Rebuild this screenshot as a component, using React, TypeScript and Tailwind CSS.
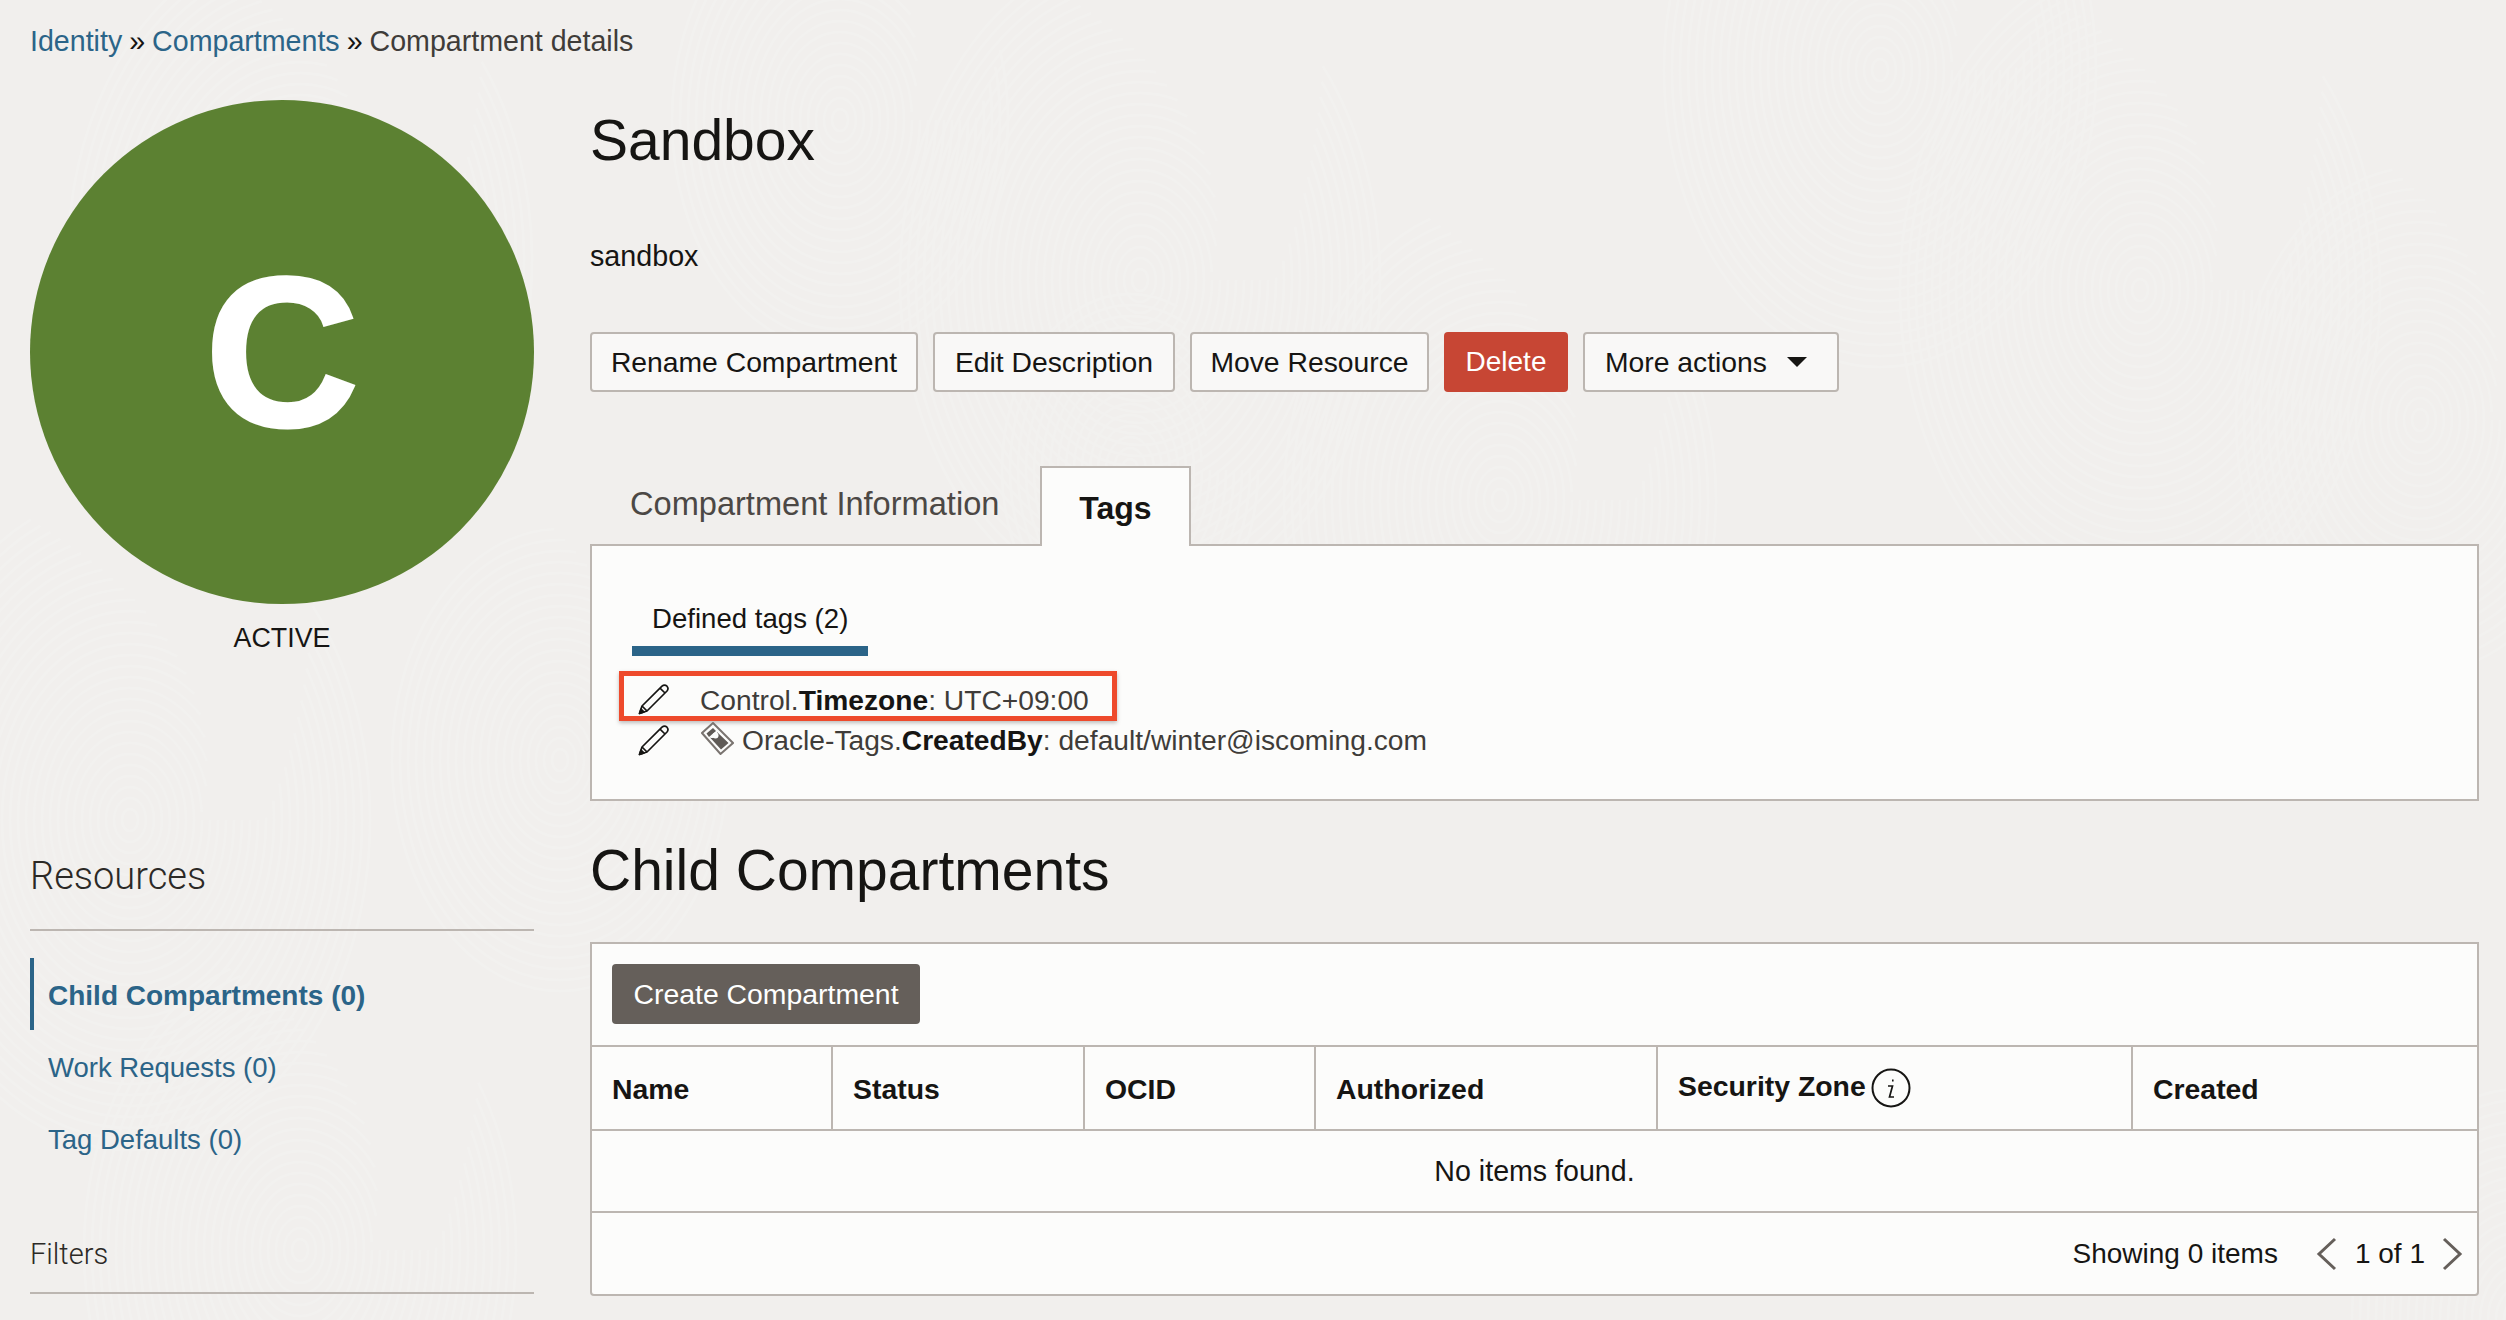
import React from "react";

const sans = "font-['Liberation_Sans',Arial,sans-serif]";

function Swirls() {
  const spots = [
    [300, 260, 320], [1140, 280, 340], [1880, 70, 300], [2140, 290, 330], [1500, 500, 300],
    [2420, 420, 260], [130, 820, 340], [300, 1250, 300], [560, 760, 240], [2520, 1320, 240], [840, 120, 240], [1130, 470, 180],
  ];
  return (
    <svg className="absolute inset-0 w-full h-full" width="2506" height="1320" aria-hidden="true">
      <g fill="none" stroke="#f3f2f0" strokeWidth="3" opacity="0.75">
        {spots.map(([x, y, r], i) =>
          Array.from({ length: Math.floor(r / 11) }, (_, k) => (
            <ellipse key={`${i}-${k}`} cx={x} cy={y} rx={(k + 1) * 8} ry={(k + 1) * 11} strokeDasharray={`${260 + k * 34} ${70 + k * 9}`} />
          ))
        )}
      </g>
    </svg>
  );
}

function Pencil({ className = "" }: { className?: string }) {
  return (
    <svg width="32" height="32" viewBox="0 0 32 32" fill="none" stroke="#161513" strokeWidth="1.7" strokeLinejoin="round" className={`shrink-0 ${className}`}>
      <path d="M1.5 30.5 L4 23 L24 3.2 Q26.5 1 29 3.2 Q31 5.5 29 8 L9 28 Z" />
      <path d="M4 23 L9 28" />
      <path d="M22 5.2 L27 10" />
      <path d="M1.5 30.5 L3 26 L6 29 Z" fill="#161513" />
    </svg>
  );
}

function TagIcon() {
  return (
    <svg width="33" height="33" viewBox="0 0 33 33" className="block shrink-0">
      <path d="M12 1 L32 21 L19.5 32 L1 11 Z" fill="#fcfcfb" stroke="#7a7470" strokeWidth="2" strokeLinejoin="miter" />
      <path d="M12 6 L15 9 L8 15 L5.5 11.5 Z" fill="#5f5a56" />
      <path d="M16 10 L27.5 21 L20 27.5 L9 15.5 Q13 17 15 14 Q17 12 16 10 Z" fill="#5f5a56" />
      <circle cx="14.5" cy="13.5" r="3" fill="#fcfcfb" />
    </svg>
  );
}

function Btn({ w, children, className = "justify-center" }: { w: string; children: React.ReactNode; className?: string }) {
  return (
    <button className={`${w} ${className} h-[60px] shrink-0 rounded-[4px] border-2 border-[#bcb6b1] bg-[#f9f8f7] text-[28.3px] text-[#161513] flex items-center`}>
      {children}
    </button>
  );
}

function Th({ w, children }: { w: string; children: React.ReactNode }) {
  return (
    <div className={`${w} shrink-0 h-full border-r-2 border-[#bcb6b1] last:border-r-0 pl-[20px] pt-[2px] flex items-center text-[28.4px] font-bold text-[#161513]`}>
      {children}
    </div>
  );
}

export default function App() {
  return (
    <div className={`relative w-[2506px] h-[1320px] overflow-hidden bg-[#f1efed] ${sans}`}>
      <Swirls />
      <div className="relative">
        <div className="h-[80px] pl-[30px] pt-[2px] flex items-center text-[28.6px] text-[#3f3c39] whitespace-nowrap">
          <span className="text-[#2b6488]">Identity</span>
          <span className="mx-[7px] text-[#161513]">»</span>
          <span className="text-[#2b6488]">Compartments</span>
          <span className="mx-[7px] text-[#161513]">»</span>
          <span>Compartment details</span>
        </div>
        <div className="flex pl-[30px]">
          <aside className="w-[504px] shrink-0 pt-[20px]">
            <div className="w-[504px] h-[504px] rounded-full bg-[#5c8132] flex items-center justify-center text-white text-[214px] font-bold leading-none [-webkit-text-stroke:3px_white]">
              C
            </div>
            <div className="mt-[14px] h-[40px] flex items-center justify-center text-[26.8px] text-[#161513]">ACTIVE</div>
            <div className="mt-[188px] h-[60px] flex items-center text-[38px] font-['Roboto',sans-serif] font-light text-[#2b2926]">Resources</div>
            <div className="mt-[23px] h-[2px] bg-[#bcb6b1]" />
            <nav className="mt-[27px] text-[27.5px] text-[#2b6488]">
              <div className="h-[72px] border-l-4 border-[#2b6488] pl-[14px] pt-[3px] flex items-center font-bold text-[28px]">Child Compartments (0)</div>
              <div className="h-[72px] pl-[18px] pt-[3px] flex items-center">Work Requests (0)</div>
              <div className="h-[72px] pl-[18px] pt-[3px] flex items-center">Tag Defaults (0)</div>
            </nav>
            <div className="mt-[51px] h-[60px] flex items-center text-[29px] font-['Roboto',sans-serif] font-light text-[#2b2926]">Filters</div>
            <div className="mt-[7px] h-[2px] bg-[#bcb6b1]" />
          </aside>

          <main className="ml-[56px] w-[1889px] shrink-0">
            <h1 className="mt-[21px] h-[80px] flex items-center text-[57px] text-[#161513]">Sandbox</h1>
            <div className="mt-[56px] h-[40px] flex items-center text-[28.7px] text-[#161513]">sandbox</div>
            <div className="mt-[55px] flex gap-[15px]">
              <Btn w="w-[328px]">Rename Compartment</Btn>
              <Btn w="w-[242px]">Edit Description</Btn>
              <Btn w="w-[239px]">Move Resource</Btn>
              <button className="w-[124px] h-[60px] shrink-0 rounded-[4px] bg-[#c74634] text-[28px] text-white">Delete</button>
              <Btn w="w-[256px]" className="justify-start pl-[20px]">
                More actions
                <svg width="20" height="10" viewBox="0 0 20 10" className="ml-[20px]"><path d="M0 0 H20 L10 10 Z" fill="#161513" /></svg>
              </Btn>
            </div>

            <div className="mt-[74px] h-[78px] flex">
              <div className="w-[450px] h-[76px] pl-[40px] flex items-center text-[32.6px] text-[#4c4845]">Compartment Information</div>
              <div className="w-[151px] h-[80px] -mb-[2px] relative z-10 border-2 border-b-0 border-[#bcb6b1] bg-[#fcfcfb] flex items-center justify-center pt-[2px] text-[32px] font-bold text-[#161513]">Tags</div>
            </div>
            <section className="h-[257px] border-2 border-[#bcb6b1] bg-[#fcfcfb]">
              <div className="ml-[40px] mt-[46px] w-[236px] h-[64px] border-b-[10px] border-[#2b6488] pl-[20px] flex items-center text-[27.6px] text-[#161513]">Defined tags (2)</div>
              <div className="ml-[27px] mt-[15px] w-[498px] h-[50px] border-[5px] border-[#ee4a2c] shadow-[0_2px_4px_rgba(0,0,0,0.25)] pl-[14px] flex items-center text-[28.2px] text-[#3f3c39] whitespace-nowrap">
                <Pencil className="mt-[5px]" />
                <span className="ml-[30px] mt-[8px]">Control.<b className="text-[#161513]">Timezone</b>: UTC+09:00</span>
              </div>
              <div className="ml-[46px] h-[38px] flex items-center text-[28.2px] text-[#3f3c39] whitespace-nowrap">
                <Pencil />
                <span className="ml-[31px] mr-[8px] -mt-[4px]"><TagIcon /></span>
                <span>Oracle-Tags.<b className="text-[#161513]">CreatedBy</b>: default/winter@iscoming.com</span>
              </div>
            </section>

            <h2 className="mt-[30px] h-[80px] flex items-center text-[57px] text-[#161513]">Child Compartments</h2>
            <section className="mt-[31px] h-[354px] rounded-b-[4px] border-2 border-[#bcb6b1] bg-[#fcfcfb]">
              <div className="h-[101px] px-[20px] pt-[20px]">
                <button className="w-[308px] h-[60px] rounded-[4px] bg-[#655f5a] text-[28.4px] text-white">Create Compartment</button>
              </div>
              <div className="h-[86px] flex border-y-2 border-[#bcb6b1]">
                <Th w="w-[241px]">Name</Th>
                <Th w="w-[252px]">Status</Th>
                <Th w="w-[231px]">OCID</Th>
                <Th w="w-[342px]">Authorized</Th>
                <Th w="w-[475px]">
                  <span className="-mt-[6px]">Security Zone</span>
                  <svg width="40" height="40" viewBox="0 0 40 40" className="ml-[5px] -mt-[2px]">
                    <circle cx="20" cy="20" r="18.5" fill="none" stroke="#161513" strokeWidth="2" />
                    <path d="M21 11.5 h1.6 v2 h-1.6 Z" fill="#161513" />
                    <path d="M17 18 H21.5 L18.5 29 H23" fill="none" stroke="#161513" strokeWidth="1.7" />
                  </svg>
                </Th>
                <Th w="flex-1">Created</Th>
              </div>
              <div className="h-[82px] border-b-2 border-[#bcb6b1] flex items-center justify-center text-[28.6px] text-[#161513]">No items found.</div>
              <div className="h-[81px] flex items-center justify-end pr-[14px] text-[28px] text-[#161513]">
                <span>Showing 0 items</span>
                <svg width="22" height="34" viewBox="0 0 22 34" className="ml-[38px]"><path d="M19 2 L3 17 L19 32" fill="none" stroke="#655f5a" strokeWidth="3" /></svg>
                <span className="ml-[17px] mr-[16px]">1 of 1</span>
                <svg width="22" height="34" viewBox="0 0 22 34"><path d="M3 2 L19 17 L3 32" fill="none" stroke="#655f5a" strokeWidth="3" /></svg>
              </div>
            </section>
          </main>
        </div>
      </div>
    </div>
  );
}
